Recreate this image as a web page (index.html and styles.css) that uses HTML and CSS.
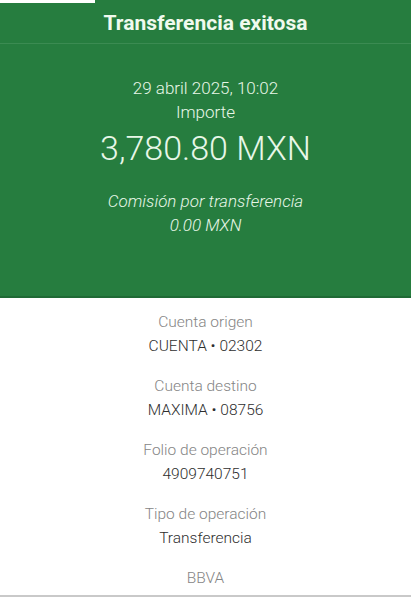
FILE: index.html
```html
<!DOCTYPE html>
<html lang="es">
<head>
    <meta charset="UTF-8">
    <meta name="viewport" content="width=device-width, initial-scale=1.0">
    <title>Transferencia exitosa</title>
    <link rel="stylesheet" href="styles.css">
</head>
<body>
    <div class="receipt">
        <header class="top-bar">
            <div class="status-strip"></div>
            <h1>Transferencia exitosa</h1>
        </header>

        <section class="summary">
            <p class="date">29 abril 2025, 10:02</p>
            <p class="label">Importe</p>
            <p class="amount">3,780.80 MXN</p>
            <div class="fee">
                <p>Comisión por transferencia</p>
                <p>0.00 MXN</p>
            </div>
        </section>

        <section class="details">
            <div class="item">
                <span class="item-label">Cuenta origen</span>
                <span class="item-value">CUENTA • 02302</span>
            </div>
            <div class="item">
                <span class="item-label">Cuenta destino</span>
                <span class="item-value">MAXIMA • 08756</span>
            </div>
            <div class="item">
                <span class="item-label">Folio de operación</span>
                <span class="item-value">4909740751</span>
            </div>
            <div class="item">
                <span class="item-label">Tipo de operación</span>
                <span class="item-value">Transferencia</span>
            </div>
            <div class="item">
                <span class="item-label">BBVA</span>
            </div>
        </section>
    </div>
</body>
</html>
```

FILE: styles.css
```css
/* General Styles */
body {
    font-family: Roboto, "Liberation Sans", sans-serif;
    margin: 0;
    padding: 0;
    background-color: #fff;
}
p {
    margin: 0;
}
.receipt {
    width: 411px;
    height: 597px;
    overflow: hidden;
    border-bottom: 2px solid #c9c9c9;
    box-sizing: border-box;
}

/* Header */
.top-bar {
    background-color: #267d3f;
    height: 44px;
    border-bottom: 1px solid #3b8b52;
    box-sizing: border-box;
}
.status-strip {
    width: 95px;
    height: 3px;
    background: #fff;
}
.top-bar h1 {
    margin: 0;
    text-align: center;
    color: #f0faee;
    font-size: 21px;
    font-weight: bold;
    line-height: 40px;
}

/* Green summary */
.summary {
    background-color: #267d3f;
    height: 254px;
    border-bottom: 2px solid #1f6a35;
    box-sizing: border-box;
    padding-top: 32px;
    text-align: center;
    color: #e8f7e8;
    font-size: 17px;
    font-weight: 300;
    line-height: 24px;
}
.summary .amount {
    font-size: 34px;
    line-height: 48px;
    margin-bottom: 17px;
}
.summary .fee {
    font-style: italic;
}

/* Detail rows */
.details {
    display: flex;
    flex-direction: column;
    align-items: center;
    gap: 16px;
    padding-top: 12px;
    font-weight: 300;
    line-height: 24px;
}
.item {
    display: flex;
    flex-direction: column;
    align-items: center;
}
.item-label {
    color: #858585;
    font-size: 15.5px;
}
.item-value {
    color: #2e2e2e;
    font-size: 15.5px;
}
```
